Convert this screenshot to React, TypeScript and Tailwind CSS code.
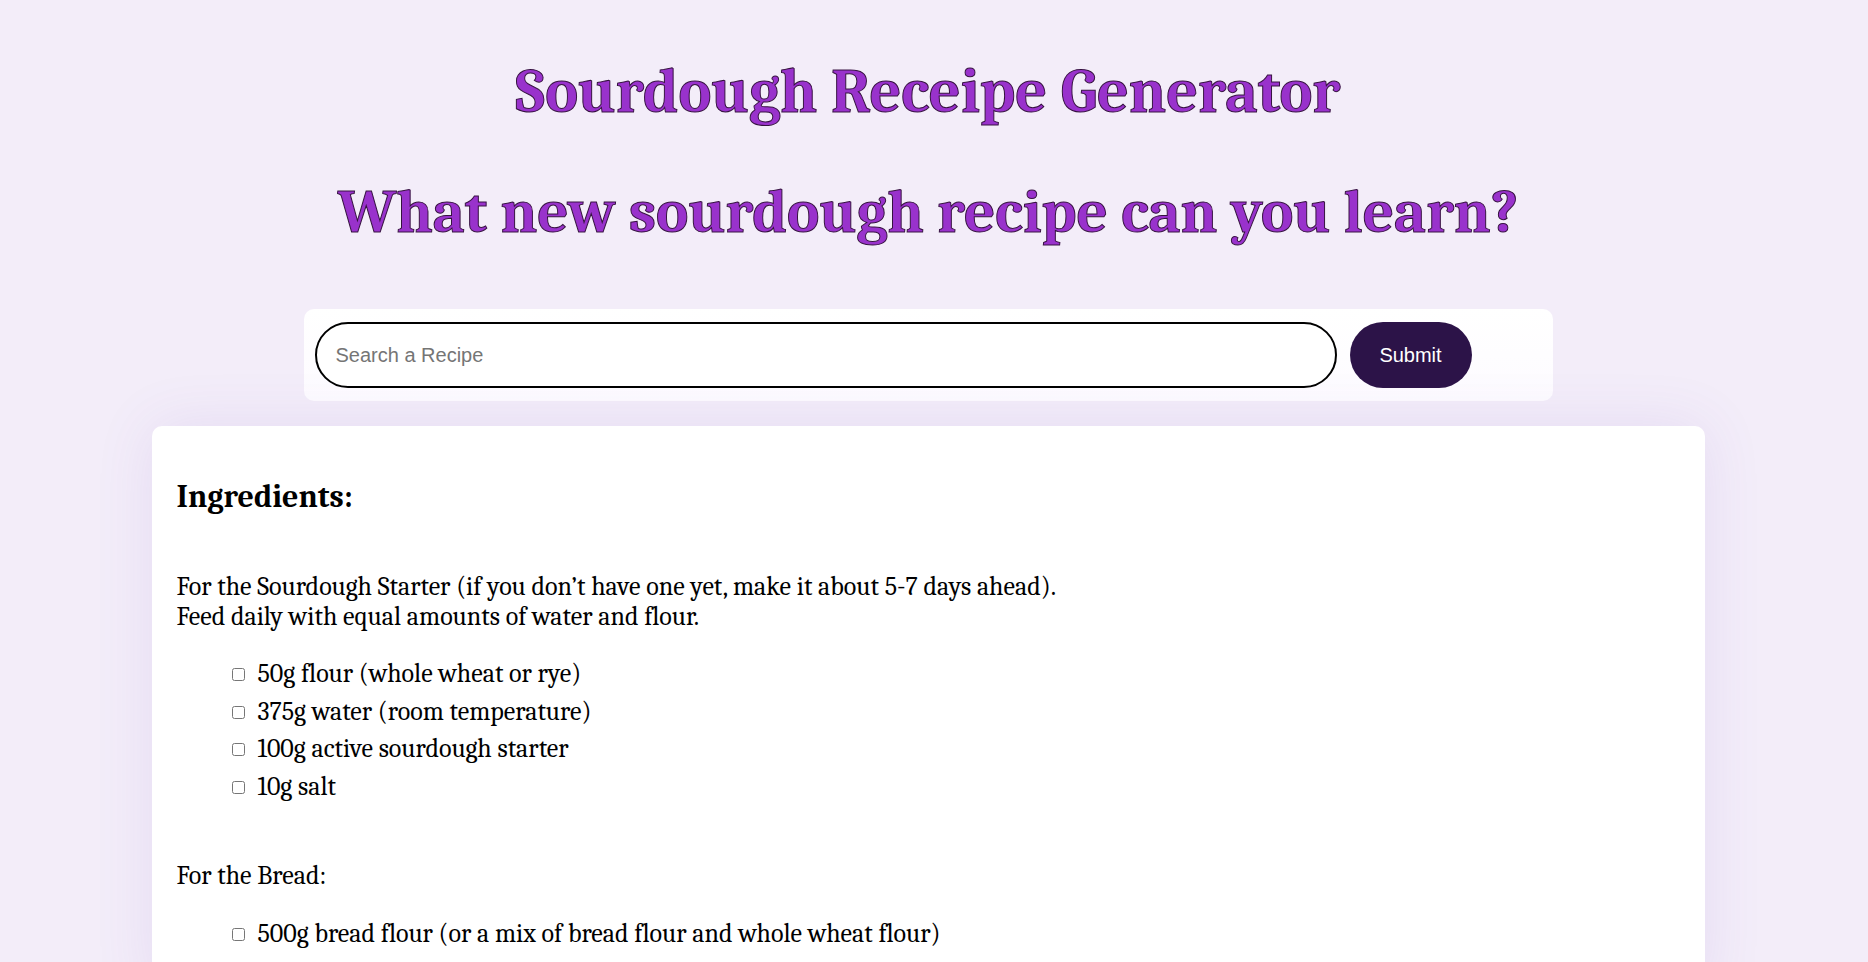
import { useState } from "react";

type Section = {
  intro: string[];
  items: string[];
};

const sections: Section[] = [
  {
    intro: [
      "For the Sourdough Starter (if you don’t have one yet, make it about 5-7 days ahead).",
      "Feed daily with equal amounts of water and flour.",
    ],
    items: [
      "50g flour (whole wheat or rye)",
      "375g water (room temperature)",
      "100g active sourdough starter",
      "10g salt",
    ],
  },
  {
    intro: ["For the Bread:"],
    items: ["500g bread flour (or a mix of bread flour and whole wheat flour)"],
  },
];

function App() {
  const [query, setQuery] = useState("");

  return (
    <main className="min-h-screen bg-[#f3edf9] pr-3 pt-[56px] font-['Cambria','Caladea','Liberation_Serif',serif]">
      <h1 className="text-center text-[62px] font-bold leading-[72px] text-[#9932cc] [-webkit-text-stroke:1px_#35123f]">
        Sourdough Receipe Generator
      </h1>
      <h2 className="mt-[48px] text-center text-[61px] font-bold leading-[72px] text-[#9932cc] [-webkit-text-stroke:1px_#35123f]">
        What new sourdough recipe can you learn?
      </h2>

      {/* search bar */}
      <div className="mx-auto mt-[61px] flex h-[92px] w-[1249px] items-center gap-[13px] rounded-[10px] bg-gradient-to-b from-white to-[#fdfbff] px-[11px]">
        <input
          type="text"
          value={query}
          onChange={(e) => setQuery(e.target.value)}
          placeholder="Search a Recipe"
          className="h-[66px] w-[1022px] rounded-full border-2 border-black bg-white pl-[19px] font-['Liberation_Sans',Arial,sans-serif] text-[20px] text-black outline-none placeholder:text-[#757575]"
        />
        <button className="h-[66px] w-[122px] rounded-full bg-[#2c1348] font-['Liberation_Sans',Arial,sans-serif] text-[20px] text-white">
          Submit
        </button>
      </div>

      {/* recipe card */}
      <div className="mx-auto mt-[25px] w-[1553px] rounded-[10px] bg-white px-[25px] pt-[51px] pb-10 shadow-[0_0_60px_rgba(110,70,190,0.10)]">
        <h3 className="text-[32px] font-bold leading-[40px] text-black">Ingredients:</h3>
        {sections.map((section, i) => (
          <div key={i} className="mt-[55px]">
            <p className="text-[26px] leading-[30px] text-black">
              {section.intro.map((line, j) => (
                <span key={j} className="block">
                  {line}
                </span>
              ))}
            </p>
            <ul className={i === 0 ? "mt-[24px]" : "mt-[25px]"}>
              {section.items.map((item, k) => (
                <li key={k} className="flex h-[37.5px] items-center text-[26px] text-black">
                  <input type="checkbox" className="ml-[55px] h-[13px] w-[13px]" />
                  <span className="ml-[13px]">{item}</span>
                </li>
              ))}
            </ul>
          </div>
        ))}
      </div>
    </main>
  );
}

export default App;
